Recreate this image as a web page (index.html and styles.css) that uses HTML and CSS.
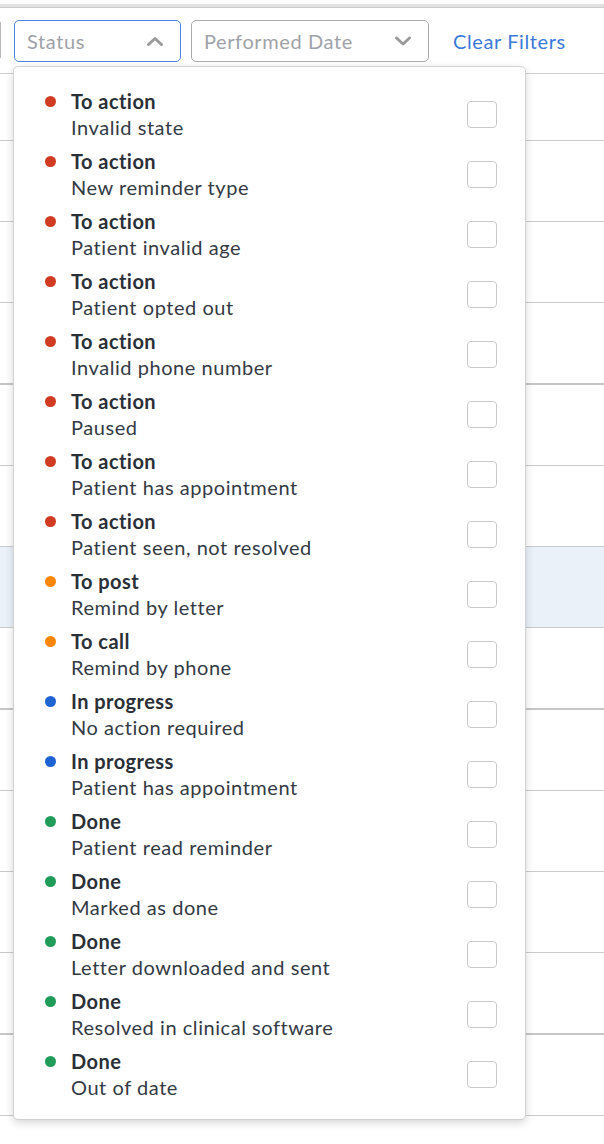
FILE: index.html
```html
<!DOCTYPE html>
<html lang="en">
<head>
<meta charset="utf-8">
<title>Status filter</title>
<link rel="stylesheet" href="styles.css">
</head>
<body>
<div class="page">
  <div class="topband"></div>
  <div class="filterbar">
    <div class="edge"></div>
    <div class="select select-open">
      <span class="placeholder">Status</span>
      <svg class="chev" width="16" height="10" viewBox="0 0 16 10"><polyline points="1.5,8.5 8,2.5 14.5,8.5" fill="none" stroke="#9b9b9b" stroke-width="3" stroke-linecap="round" stroke-linejoin="round"/></svg>
    </div>
    <div class="select select-date">
      <span class="placeholder">Performed Date</span>
      <svg class="chev" width="16" height="10" viewBox="0 0 16 10"><polyline points="1.5,2 8,8 14.5,2" fill="none" stroke="#9b9b9b" stroke-width="3" stroke-linecap="round" stroke-linejoin="round"/></svg>
    </div>
    <a class="clear" href="#">Clear Filters</a>
  </div>
  <div class="table">
    <div class="row row-first"></div>
    <div class="row"></div>
    <div class="row"></div>
    <div class="row row-thick"></div>
    <div class="row"></div>
    <div class="row"></div>
    <div class="row row-hl"></div>
    <div class="row row-thick"></div>
    <div class="row"></div>
    <div class="row"></div>
    <div class="row"></div>
    <div class="row row-thick"></div>
    <div class="row"></div>
  </div>

  <div class="menu">
    <div class="item"><span class="dot red"></span><div class="txt"><div class="title">To action</div><div class="sub">Invalid state</div></div><span class="cb"></span></div>
    <div class="item"><span class="dot red"></span><div class="txt"><div class="title">To action</div><div class="sub">New reminder type</div></div><span class="cb"></span></div>
    <div class="item"><span class="dot red"></span><div class="txt"><div class="title">To action</div><div class="sub">Patient invalid age</div></div><span class="cb"></span></div>
    <div class="item"><span class="dot red"></span><div class="txt"><div class="title">To action</div><div class="sub">Patient opted out</div></div><span class="cb"></span></div>
    <div class="item"><span class="dot red"></span><div class="txt"><div class="title">To action</div><div class="sub">Invalid phone number</div></div><span class="cb"></span></div>
    <div class="item"><span class="dot red"></span><div class="txt"><div class="title">To action</div><div class="sub">Paused</div></div><span class="cb"></span></div>
    <div class="item"><span class="dot red"></span><div class="txt"><div class="title">To action</div><div class="sub">Patient has appointment</div></div><span class="cb"></span></div>
    <div class="item"><span class="dot red"></span><div class="txt"><div class="title">To action</div><div class="sub">Patient seen, not resolved</div></div><span class="cb"></span></div>
    <div class="item"><span class="dot orange"></span><div class="txt"><div class="title">To post</div><div class="sub">Remind by letter</div></div><span class="cb"></span></div>
    <div class="item"><span class="dot orange"></span><div class="txt"><div class="title">To call</div><div class="sub">Remind by phone</div></div><span class="cb"></span></div>
    <div class="item"><span class="dot blue"></span><div class="txt"><div class="title">In progress</div><div class="sub">No action required</div></div><span class="cb"></span></div>
    <div class="item"><span class="dot blue"></span><div class="txt"><div class="title">In progress</div><div class="sub">Patient has appointment</div></div><span class="cb"></span></div>
    <div class="item"><span class="dot green"></span><div class="txt"><div class="title">Done</div><div class="sub">Patient read reminder</div></div><span class="cb"></span></div>
    <div class="item"><span class="dot green"></span><div class="txt"><div class="title">Done</div><div class="sub">Marked as done</div></div><span class="cb"></span></div>
    <div class="item"><span class="dot green"></span><div class="txt"><div class="title">Done</div><div class="sub">Letter downloaded and sent</div></div><span class="cb"></span></div>
    <div class="item"><span class="dot green"></span><div class="txt"><div class="title">Done</div><div class="sub">Resolved in clinical software</div></div><span class="cb"></span></div>
    <div class="item"><span class="dot green"></span><div class="txt"><div class="title">Done</div><div class="sub">Out of date</div></div><span class="cb"></span></div>
  </div>
</div>
</body>
</html>
```

FILE: styles.css
```css
* { box-sizing: border-box; }
html, body { margin: 0; padding: 0; background: #ffffff; }
body {
  font-family: Lato, "Noto Sans", "Liberation Sans", sans-serif;
  color: #2c313b;
  width: 604px;
  height: 1144px;
  overflow: hidden;
}
.page { position: relative; width: 604px; height: 1144px; }

.topband {
  height: 8px;
  border-top: 4px solid #ffffff;
  background: #e2e2e2;
  border-bottom: 1px solid #cdcdcd;
}

.filterbar {
  height: 66px;
  display: flex;
  align-items: flex-start;
  padding-top: 12px;
  border-bottom: 1px solid #cfcfcf;
}
.edge {
  width: 1px;
  height: 36px;
  margin-top: 2px;
  background: #b8b8b8;
  margin-right: 13px;
}
.select {
  height: 42px;
  display: flex;
  align-items: center;
  justify-content: space-between;
  padding: 0 17px 0 12px;
  border-radius: 5px;
  font-size: 20px;
  line-height: 24px;
  letter-spacing: 0.6px;
}
.select-open { width: 167px; border: 1px solid #4a86e0; }
.select-date { width: 238px; border: 1px solid #ababab; margin-left: 10px; }
.placeholder { color: #9ea2a8; }
.chev { display: block; }
.clear {
  margin-left: 24px;
  height: 42px;
  display: flex;
  align-items: center;
  font-size: 20px;
  line-height: 24px;
  letter-spacing: 0.6px;
  color: #3c7ad8;
  text-decoration: none;
}

.row { height: 81px; border-bottom: 1px solid #cbcbcb; }
.row-first { height: 67px; }
.row-thick { height: 82px; border-bottom: 2px solid #c6c6c6; }
.row-hl { background: #ebf1f9; }

.menu {
  position: absolute;
  top: 66px;
  left: 13px;
  width: 513px;
  height: 1054px;
  background: #ffffff;
  border: 1px solid #d2d2d2;
  border-radius: 5px;
  box-shadow: 0 3px 8px rgba(0, 0, 0, 0.16);
  padding: 17px 0 15px 0;
}
.item {
  height: 60px;
  display: flex;
  align-items: center;
  padding: 0 28px 0 31px;
}
.dot {
  align-self: flex-start;
  margin-top: 12px;
  width: 11px;
  height: 11px;
  border-radius: 50%;
  flex: none;
}
.red { background: #d03b22; }
.orange { background: #ff8700; }
.blue { background: #1e63d2; }
.green { background: #1f9c5a; }
.txt {
  flex: 1;
  margin-left: 15px;
  font-size: 20px;
  line-height: 26px;
}
.title { font-weight: 700; color: #2a2f38; letter-spacing: 0.45px; }
.sub { font-weight: 400; color: #343a45; letter-spacing: 0.55px; }
.cb {
  flex: none;
  width: 30px;
  height: 27px;
  border: 1px solid #c9c9c9;
  border-radius: 4px;
  background: #ffffff;
}
```
